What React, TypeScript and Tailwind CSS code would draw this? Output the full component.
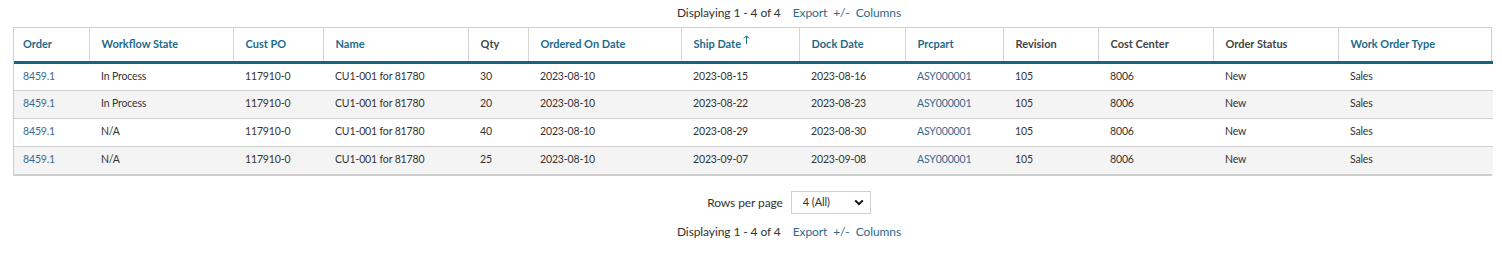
import React from "react";

const columns = [
  { label: "Order", width: "w-[75px]", sortable: true },
  { label: "Workflow State", width: "w-[144px]", sortable: true },
  { label: "Cust PO", width: "w-[90px]", sortable: true },
  { label: "Name", width: "w-[145px]", sortable: true },
  { label: "Qty", width: "w-[60px]", sortable: false },
  { label: "Ordered On Date", width: "w-[153px]", sortable: true },
  { label: "Ship Date", width: "w-[118px]", sortable: true, sorted: true },
  { label: "Dock Date", width: "w-[106px]", sortable: true },
  { label: "Prcpart", width: "w-[98px]", sortable: true },
  { label: "Revision", width: "w-[95px]", sortable: false },
  { label: "Cost Center", width: "w-[115px]", sortable: false },
  { label: "Order Status", width: "w-[125px]", sortable: false },
  { label: "Work Order Type", width: "w-[155px]", sortable: true },
];

const rows = [
  { state: "In Process", qty: "30", ship: "2023-08-15", dock: "2023-08-16" },
  { state: "In Process", qty: "20", ship: "2023-08-22", dock: "2023-08-23" },
  { state: "N/A", qty: "40", ship: "2023-08-29", dock: "2023-08-30" },
  { state: "N/A", qty: "25", ship: "2023-09-07", dock: "2023-09-08" },
];

function Pager() {
  return (
    <div className="flex justify-center pl-[76px] text-[12px] tracking-[-0.1px] text-[#333]">
      <span>Displaying 1 - 4 of 4</span>
      <span className="ml-[12px] text-[#2f6a8c]">Export</span>
      <span className="ml-[6px] text-[#2f6a8c]">+/-</span>
      <span className="ml-[6px] text-[#2f6a8c]">Columns</span>
    </div>
  );
}

export default function App() {
  return (
    <div className="bg-white w-[1502px] h-[280px] pt-[4px] font-['Lato',sans-serif]">
      <Pager />
      <div className="ml-[13px] mt-[5px] w-[1479px] border border-[#cfcfcf] border-b-[2px]">
        <table className="table-fixed w-full border-collapse text-[10.5px] tracking-[-0.15px]">
          <thead>
            <tr className="border-b-[3px] border-[#1b6282] h-[34px]">
              {columns.map((c, i) => (
                <th
                  key={c.label}
                  className={`${c.width} text-left text-[11px] tracking-normal font-bold border-l border-[#d4d4d4] first:border-l-0 ${
                    i === 0 ? "pl-[9px]" : "pl-[12px]"
                  } ${c.sortable ? "text-[#1d6a8c]" : "text-[#444]"}`}
                >
                  <span className="inline-flex items-start">
                    {c.label}
                    {c.sorted && (
                      <svg width="7" height="9" viewBox="0 0 7 9" className="ml-[2px] -mt-[1px]">
                        <path d="M3.5 9V1M0.8 3.6L3.5 0.8L6.2 3.6" stroke="#1d6a8c" strokeWidth="1" fill="none" />
                      </svg>
                    )}
                  </span>
                </th>
              ))}
            </tr>
          </thead>
          <tbody className="text-[#333]">
            {rows.map((r, i) => (
              <tr
                key={i}
                className={`h-[28px] border-t border-[#cfcfcf] first:border-t-0 ${i % 2 === 1 ? "bg-[#f4f4f4]" : "bg-white"}`}
              >
                <td className="pl-[9px] text-[#3a6a8e]">8459.1</td>
                <td className="pl-[12px]">{r.state}</td>
                <td className="pl-[12px]">117910-0</td>
                <td className="pl-[12px]">CU1-001 for 81780</td>
                <td className="pl-[12px]">{r.qty}</td>
                <td className="pl-[12px]">2023-08-10</td>
                <td className="pl-[12px]">{r.ship}</td>
                <td className="pl-[12px]">{r.dock}</td>
                <td className="pl-[12px] text-[#3a6a8e]">ASY000001</td>
                <td className="pl-[12px]">105</td>
                <td className="pl-[12px]">8006</td>
                <td className="pl-[12px]">New</td>
                <td className="pl-[12px]">Sales</td>
              </tr>
            ))}
          </tbody>
        </table>
      </div>
      <div className="mt-[15px] flex justify-center items-center pl-[76px] text-[12px] tracking-[-0.1px] text-[#333]">
        <span>Rows per page</span>
        <div className="ml-[8px] w-[80px] h-[23px] border border-[#d0d0d0] flex items-center justify-between pl-[11px] pr-[6px] text-[11px] text-[#333]">
          <span>4 (All)</span>
          <svg width="10" height="7" viewBox="0 0 10 7">
            <path d="M1.2 1.4L5 5.2L8.8 1.4" stroke="#111" strokeWidth="2" fill="none" />
          </svg>
        </div>
      </div>
      <div className="mt-[9px]">
        <Pager />
      </div>
    </div>
  );
}
